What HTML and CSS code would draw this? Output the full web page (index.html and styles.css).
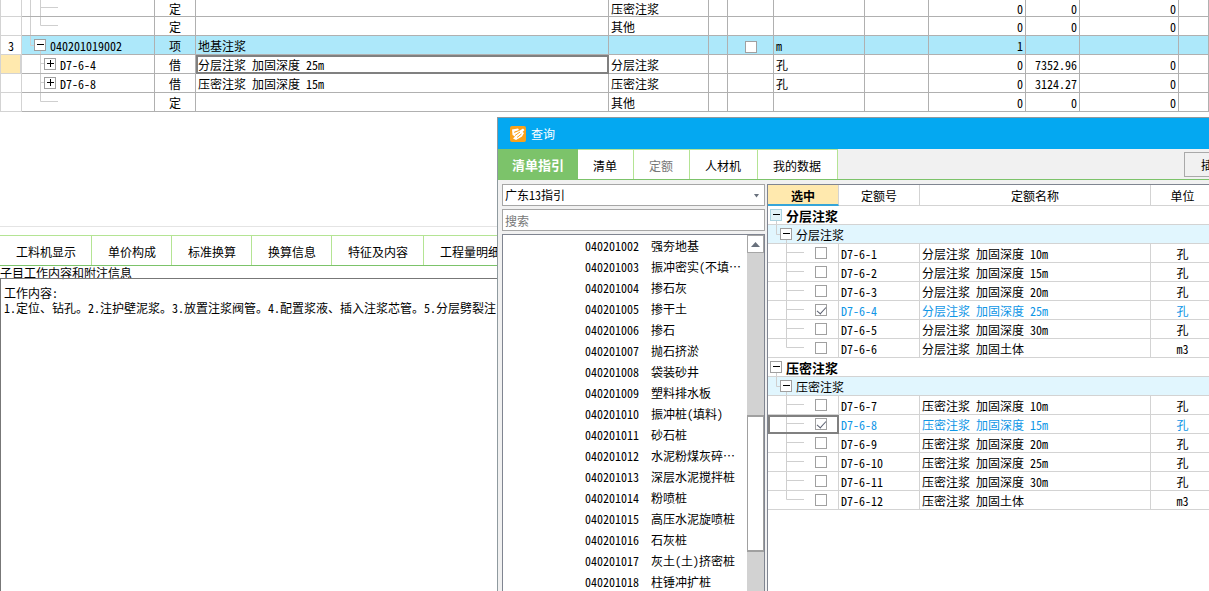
FILE: index.html
```html
<!DOCTYPE html>
<html lang="zh-CN">
<head>
<meta charset="utf-8">
<title>查询</title>
<link rel="stylesheet" href="styles.css">
</head>
<body>
<svg class="defs" aria-hidden="true">
  <symbol id="minus" viewBox="0 0 12 18"><path class="line" d="M6.5 14V18"/><rect class="box" x=".5" y="3.5" width="11" height="11"/><path class="sign" d="M3 8.5H10"/></symbol>
  <symbol id="plus" viewBox="0 0 12 18"><rect class="box" x=".5" y="3.5" width="11" height="11"/><path class="sign" d="M3 8.5H10M6.5 5V12"/></symbol>
  <symbol id="fork" viewBox="0 0 47 19"><path class="line" d="M18.5 0V19M18 8.5H36"/></symbol>
  <symbol id="end" viewBox="0 0 47 19"><path class="line" d="M18.5 0V8.5H36"/></symbol>
  <symbol id="elbow" viewBox="0 0 12 19"><path class="line" d="M8.5 0V9.5H12"/></symbol>
</svg>

<main class="workspace">
  <section class="sheet">
    <table class="grid main-grid">
      <colgroup><col class="w22"><col class="w133"><col class="w41"><col class="w413"><col class="w100"><col class="w19"><col class="w46"><col class="w91"><col class="w64"><col class="w97"><col class="w54"><col class="w99"><col></colgroup>
      <tbody>
      <tr class="first"><td></td><td><div class="tree"><svg width="47" height="19"><path class="line" d="M8.5 0V19M18.5 0V19M18 8.5H36"/></svg></div></td><td class="c">定</td><td></td><td>压密注浆</td><td></td><td></td><td></td><td></td><td class="r">0</td><td class="r">0</td><td class="r">0</td><td></td></tr>
      <tr><td></td><td><div class="tree"><svg width="47" height="19"><path class="line" d="M8.5 0V19M18.5 0V8.5H36"/></svg></div></td><td class="c">定</td><td></td><td>其他</td><td></td><td></td><td></td><td></td><td class="r">0</td><td class="r">0</td><td class="r">0</td><td></td></tr>
      <tr class="item"><td class="c">3</td><td><div class="tree"><svg width="12" height="19"><use href="#elbow"/></svg><button class="toggle" aria-label="折叠"><svg width="12" height="18"><use href="#minus"/></svg></button><span>040201019002</span></div></td><td class="c">项</td><td>地基注浆</td><td></td><td></td><td class="c"><input type="checkbox" aria-label="地基注浆"></td><td>m</td><td></td><td class="r">1</td><td></td><td></td><td></td></tr>
      <tr><td class="current"></td><td><div class="tree"><svg width="22" height="19"><path class="line" d="M18.5 0V19M18 8.5H22"/></svg><button class="toggle" aria-label="展开"><svg width="12" height="18"><use href="#plus"/></svg></button><span>D7-6-4</span></div></td><td class="c">借</td><td class="focus">分层注浆 加固深度 25m</td><td>分层注浆</td><td></td><td></td><td>孔</td><td></td><td class="r">0</td><td class="r">7352.96</td><td class="r">0</td><td></td></tr>
      <tr><td></td><td><div class="tree"><svg width="22" height="19"><path class="line" d="M18.5 0V19M18 8.5H22"/></svg><button class="toggle" aria-label="展开"><svg width="12" height="18"><use href="#plus"/></svg></button><span>D7-6-8</span></div></td><td class="c">借</td><td>压密注浆 加固深度 15m</td><td>压密注浆</td><td></td><td></td><td>孔</td><td></td><td class="r">0</td><td class="r">3124.27</td><td class="r">0</td><td></td></tr>
      <tr><td></td><td><div class="tree"><svg width="47" height="19"><use href="#end"/></svg></div></td><td class="c">定</td><td></td><td>其他</td><td></td><td></td><td></td><td></td><td class="r">0</td><td class="r">0</td><td class="r">0</td><td></td></tr>
      </tbody>
    </table>
  </section>

  <section class="detail">
    <nav class="detail-tabs">
      <button>工料机显示</button><button>单价构成</button><button>标准换算</button><button>换算信息</button><button>特征及内容</button><button>工程量明细</button>
    </nav>
    <h2 class="detail-title">子目工作内容和附注信息</h2>
    <div class="notes"><p>工作内容:</p><p>1.定位、钻孔。2.注护壁泥浆。3.放置注浆阀管。4.配置浆液、插入注浆芯管。5.分层劈裂注</p></div>
  </section>
</main>

<section class="dialog" role="dialog" aria-labelledby="dialog-title">
  <header class="titlebar">
    <svg width="16" height="16" viewBox="0 0 16 16"><rect width="16" height="16" rx="2" fill="#f9a11b"/><path d="M2 3.500 8 2.500 9 4 4.500 5.500 4 7 9 5 13 2.500 14.500 4 12.500 6 14 7 12 10.500 6 14 3 12.500 5 10.500 2.500 9Z" fill="#fff"/><path d="M5 9.500 10 6M7 11.500 11.500 8" fill="none" stroke="#f9a11b"/></svg>
    <h1 id="dialog-title">查询</h1>
  </header>
  <nav class="dialog-tabs">
    <button class="active">清单指引</button><button>清单</button><button class="muted">定额</button><button>人材机</button><button>我的数据</button>
    <div class="actions"><button class="insert">插入</button></div>
  </nav>
  <div class="dialog-body">
    <aside class="sidebar">
      <div class="select-wrap"><select aria-label="指引库"><option>广东13指引</option></select><svg width="7" height="4" viewBox="0 0 7 4"><path d="M1 0H6L3.5 3.5Z" fill="#68707c"/></svg></div>
      <input class="search" type="text" placeholder="搜索" aria-label="搜索">
      <div class="list-box">
        <ul class="list">
          <li><span>040201002</span><span>强夯地基</span></li>
          <li><span>040201003</span><span>振冲密实(不填…</span></li>
          <li><span>040201004</span><span>掺石灰</span></li>
          <li><span>040201005</span><span>掺干土</span></li>
          <li><span>040201006</span><span>掺石</span></li>
          <li><span>040201007</span><span>抛石挤淤</span></li>
          <li><span>040201008</span><span>袋装砂井</span></li>
          <li><span>040201009</span><span>塑料排水板</span></li>
          <li><span>040201010</span><span>振冲桩(填料)</span></li>
          <li><span>040201011</span><span>砂石桩</span></li>
          <li><span>040201012</span><span>水泥粉煤灰碎…</span></li>
          <li><span>040201013</span><span>深层水泥搅拌桩</span></li>
          <li><span>040201014</span><span>粉喷桩</span></li>
          <li><span>040201015</span><span>高压水泥旋喷桩</span></li>
          <li><span>040201016</span><span>石灰桩</span></li>
          <li><span>040201017</span><span>灰土(土)挤密桩</span></li>
          <li><span>040201018</span><span>柱锤冲扩桩</span></li>
        </ul>
        <div class="scrollbar">
          <button class="scroll-up" aria-label="向上滚动"><svg width="9" height="5" viewBox="0 0 9 5"><path d="M0 5 4.500 0 9 5Z" fill="#68707c"/></svg></button>
          <div class="thumb"></div>
        </div>
      </div>
    </aside>
    <div class="results">
      <table class="grid result-grid">
        <colgroup><col class="w71"><col class="w81"><col class="w231"><col></colgroup>
        <thead><tr><th class="picked">选中</th><th>定额号</th><th>定额名称</th><th class="unit">单位</th></tr></thead>
        <tbody>
        <tr class="group"><td colspan="4"><div class="tree top"><button class="toggle hot" aria-label="折叠"><svg width="12" height="18"><use href="#minus"/></svg></button><span>分层注浆</span></div></td></tr>
        <tr class="sub"><td colspan="4"><div class="tree"><svg width="12" height="19"><use href="#elbow"/></svg><button class="toggle" aria-label="折叠"><svg width="12" height="18"><use href="#minus"/></svg></button><span>分层注浆</span></div></td></tr>
        <tr><td><div class="tree"><svg width="47" height="19"><use href="#fork"/></svg><input type="checkbox" aria-label="D7-6-1"></div></td><td>D7-6-1</td><td>分层注浆 加固深度 10m</td><td class="unit">孔</td></tr>
        <tr><td><div class="tree"><svg width="47" height="19"><use href="#fork"/></svg><input type="checkbox" aria-label="D7-6-2"></div></td><td>D7-6-2</td><td>分层注浆 加固深度 15m</td><td class="unit">孔</td></tr>
        <tr><td><div class="tree"><svg width="47" height="19"><use href="#fork"/></svg><input type="checkbox" aria-label="D7-6-3"></div></td><td>D7-6-3</td><td>分层注浆 加固深度 20m</td><td class="unit">孔</td></tr>
        <tr class="chosen"><td><div class="tree"><svg width="47" height="19"><use href="#fork"/></svg><input type="checkbox" checked aria-label="D7-6-4"></div></td><td>D7-6-4</td><td>分层注浆 加固深度 25m</td><td class="unit">孔</td></tr>
        <tr><td><div class="tree"><svg width="47" height="19"><use href="#fork"/></svg><input type="checkbox" aria-label="D7-6-5"></div></td><td>D7-6-5</td><td>分层注浆 加固深度 30m</td><td class="unit">孔</td></tr>
        <tr><td><div class="tree"><svg width="47" height="19"><use href="#end"/></svg><input type="checkbox" aria-label="D7-6-6"></div></td><td>D7-6-6</td><td>分层注浆 加固土体</td><td class="unit">m3</td></tr>
        <tr class="group"><td colspan="4"><div class="tree top"><button class="toggle" aria-label="折叠"><svg width="12" height="18"><use href="#minus"/></svg></button><span>压密注浆</span></div></td></tr>
        <tr class="sub"><td colspan="4"><div class="tree"><svg width="12" height="19"><use href="#elbow"/></svg><button class="toggle" aria-label="折叠"><svg width="12" height="18"><use href="#minus"/></svg></button><span>压密注浆</span></div></td></tr>
        <tr><td><div class="tree"><svg width="47" height="19"><use href="#fork"/></svg><input type="checkbox" aria-label="D7-6-7"></div></td><td>D7-6-7</td><td>压密注浆 加固深度 10m</td><td class="unit">孔</td></tr>
        <tr class="chosen"><td class="focus"><div class="tree"><svg width="47" height="19"><use href="#fork"/></svg><input type="checkbox" checked aria-label="D7-6-8"></div></td><td>D7-6-8</td><td>压密注浆 加固深度 15m</td><td class="unit">孔</td></tr>
        <tr><td><div class="tree"><svg width="47" height="19"><use href="#fork"/></svg><input type="checkbox" aria-label="D7-6-9"></div></td><td>D7-6-9</td><td>压密注浆 加固深度 20m</td><td class="unit">孔</td></tr>
        <tr><td><div class="tree"><svg width="47" height="19"><use href="#fork"/></svg><input type="checkbox" aria-label="D7-6-10"></div></td><td>D7-6-10</td><td>压密注浆 加固深度 25m</td><td class="unit">孔</td></tr>
        <tr><td><div class="tree"><svg width="47" height="19"><use href="#fork"/></svg><input type="checkbox" aria-label="D7-6-11"></div></td><td>D7-6-11</td><td>压密注浆 加固深度 30m</td><td class="unit">孔</td></tr>
        <tr><td><div class="tree"><svg width="47" height="19"><use href="#end"/></svg><input type="checkbox" aria-label="D7-6-12"></div></td><td>D7-6-12</td><td>压密注浆 加固土体</td><td class="unit">m3</td></tr>
        </tbody>
      </table>
    </div>
  </div>
</section>
</body>
</html>
```

FILE: styles.css
```css
* { box-sizing: border-box; }
body, button, input, select, h1, h2, th {
  font: 12px/14px "Noto Sans Mono CJK SC", "Noto Sans CJK SC", sans-serif;
  color: #000;
}
body { margin: 0; height: 100vh; overflow: hidden; background: #fff; position: relative; }
h1, h2, p, ul { margin: 0; padding: 0; list-style: none; }
button { margin: 0; padding: 0; border: 0; background: none; white-space: nowrap; }
.defs { display: none; }
.line { fill: none; stroke: #cfcfcf; }
.box { fill: var(--box-fill, #fff); stroke: var(--box-line, #a0a0a0); }
.sign { fill: none; stroke: #000; }

.workspace { display: flex; flex-direction: column; height: 100%; }
.sheet { flex: none; height: 227px; border-bottom: 1px solid #e4e4e4; overflow: hidden; }

.grid { width: 100%; table-layout: fixed; border-collapse: separate; border-spacing: 0; }
.grid td, .grid th {
  height: 19px;
  padding: 1px 2px 0;
  border: 0 solid #b0b0b0;
  border-width: 0 1px 1px 0;
  overflow: hidden;
  white-space: nowrap;
  vertical-align: middle;
}
.grid .c { text-align: center; }
.grid .r { text-align: right; }
.grid td:has(.tree) { padding: 0; }
.grid .focus { outline: 2px solid #808080; outline-offset: -2px; }
.main-grid td:first-child { border-left: 1px solid #d3d3d3; border-color: #d3d3d3; }
.main-grid .first td { height: 17px; }
.main-grid .first .tree { height: 16px; }
.main-grid .item td { background: #ade8fa; }
.main-grid .item td:first-child { background: #fff; }
.main-grid .current { background: #ffe9ae; border-right: 2px solid #36a5d8; }

.w22 { width: 22px; } .w133 { width: 133px; } .w41 { width: 41px; } .w413 { width: 413px; }
.w100 { width: 100px; } .w19 { width: 19px; } .w46 { width: 46px; } .w91 { width: 91px; }
.w64 { width: 64px; } .w97 { width: 97px; } .w54 { width: 54px; } .w99 { width: 99px; }
.w71 { width: 71px; } .w81 { width: 81px; } .w231 { width: 231px; }

.tree { display: flex; align-items: center; height: 18px; overflow: hidden; }
.tree svg { display: block; flex: none; }
.tree span { padding-top: 2px; }
.tree.top { padding-left: 2px; }
.toggle { flex: none; margin-right: 4px; }
.toggle.hot { --box-line: #a9d3e0; --box-fill: #e3f3f8; }

input[type="checkbox"] {
  appearance: none;
  display: inline-flex;
  flex: none;
  justify-content: center;
  width: 12px;
  height: 12px;
  margin: 0;
  border: 1px solid #a0a0a0;
  background: #fff;
  vertical-align: middle;
}
input[type="checkbox"]:checked::after {
  content: "";
  width: 4px;
  height: 8px;
  border: solid #5b6070;
  border-width: 0 1px 1px 0;
  transform: rotate(42deg);
}

.detail { flex: 1; display: flex; flex-direction: column; padding-top: 8px; min-height: 0; }
.detail-tabs { display: flex; height: 31px; border-top: 1px solid #b4e494; border-bottom: 1px solid #7cc36a; }
.detail-tabs button { padding: 2px 15px 0 16px; border-right: 1px solid #b4e494; }
.detail-title { height: 12px; font-weight: 400; }
.notes { flex: 1; padding: 6px 3px; border: 1px solid #777; border-width: 1px 0 0 1px; line-height: 15px; white-space: nowrap; overflow: hidden; }

.dialog {
  position: absolute;
  left: 497px; top: 117px; right: 0; bottom: 0;
  display: flex;
  flex-direction: column;
  border: 1px solid #8f9a9f;
  border-width: 1px 0 0 1px;
  background: #f1f1f1;
  overflow: hidden;
}
.titlebar { flex: none; display: flex; align-items: center; gap: 5px; height: 31px; padding-left: 12px; background: #04a8f1; }
.titlebar h1 { color: #fff; font-weight: 400; }
.dialog-tabs { flex: none; display: flex; height: 31px; border-bottom: 1px solid #7cc36a; }
.dialog-tabs > button { padding: 3px 16px 0 15px; border: solid #b4e494; border-width: 1px 1px 0 0; background: #fff; }
.dialog-tabs > .active { padding: 2px 14px 0; border: 0; background: #7cc36a; color: #fff; font-size: 13px; font-weight: 700; }
.dialog-tabs > .muted { color: #777; }
.actions { width: 25px; margin: 3px 0 0 auto; }
.insert { width: 58px; height: 25px; border: 1px solid #a9a9a9; background: #f1f1f1; }
.dialog-body { flex: 1; display: flex; gap: 2px; min-height: 0; padding: 4px 0 0 4px; }
.sidebar { flex: none; display: flex; flex-direction: column; gap: 3px; width: 263px; }
.select-wrap { position: relative; }
.select-wrap svg { position: absolute; right: 5px; top: 10px; }
select, .search { appearance: none; display: block; width: 100%; height: 22px; padding: 0 2px; border: 1px solid #a6a6a6; border-radius: 0; background: #fff; }
.search::placeholder { color: #777; opacity: 1; }
.list-box { flex: 1; display: flex; min-height: 0; border: 1px solid #808591; border-bottom: 0; background: #fff; overflow: hidden; }
.list { flex: 1; }
.list li { display: flex; align-items: center; gap: 12px; height: 21px; padding-left: 82px; white-space: nowrap; }
.scrollbar { width: 17px; background: #d2d2d2; }
.scroll-up { display: flex; align-items: center; justify-content: center; width: 100%; height: 18px; border: 1px solid #a6a6a6; background: #fff; }
.thumb { height: 137px; margin-top: 162px; border: solid #a0a0a0; border-width: 2px 1px; background: #fff; }

.results { flex: 1; min-width: 0; border: 1px solid #808591; border-width: 1px 0 0 1px; background: #fff; overflow: hidden; }
.result-grid td, .result-grid th { border-color: #d3d3d3; }
.result-grid td:last-child { border-right: 0; }
.result-grid th { height: 21px; padding-top: 2px; }
.result-grid .picked { background: #ffe9ae; border-bottom: 2px solid #36a5d8; font-weight: 700; }
.result-grid .unit { text-align: center; padding-left: 7px; border-right: 0; }
.result-grid .group { font-weight: 700; }
.result-grid .group .tree { font-size: 13px; }
.result-grid .sub td { background: #e1f6fe; }
.result-grid .chosen td { color: #0f96e6; }
```
